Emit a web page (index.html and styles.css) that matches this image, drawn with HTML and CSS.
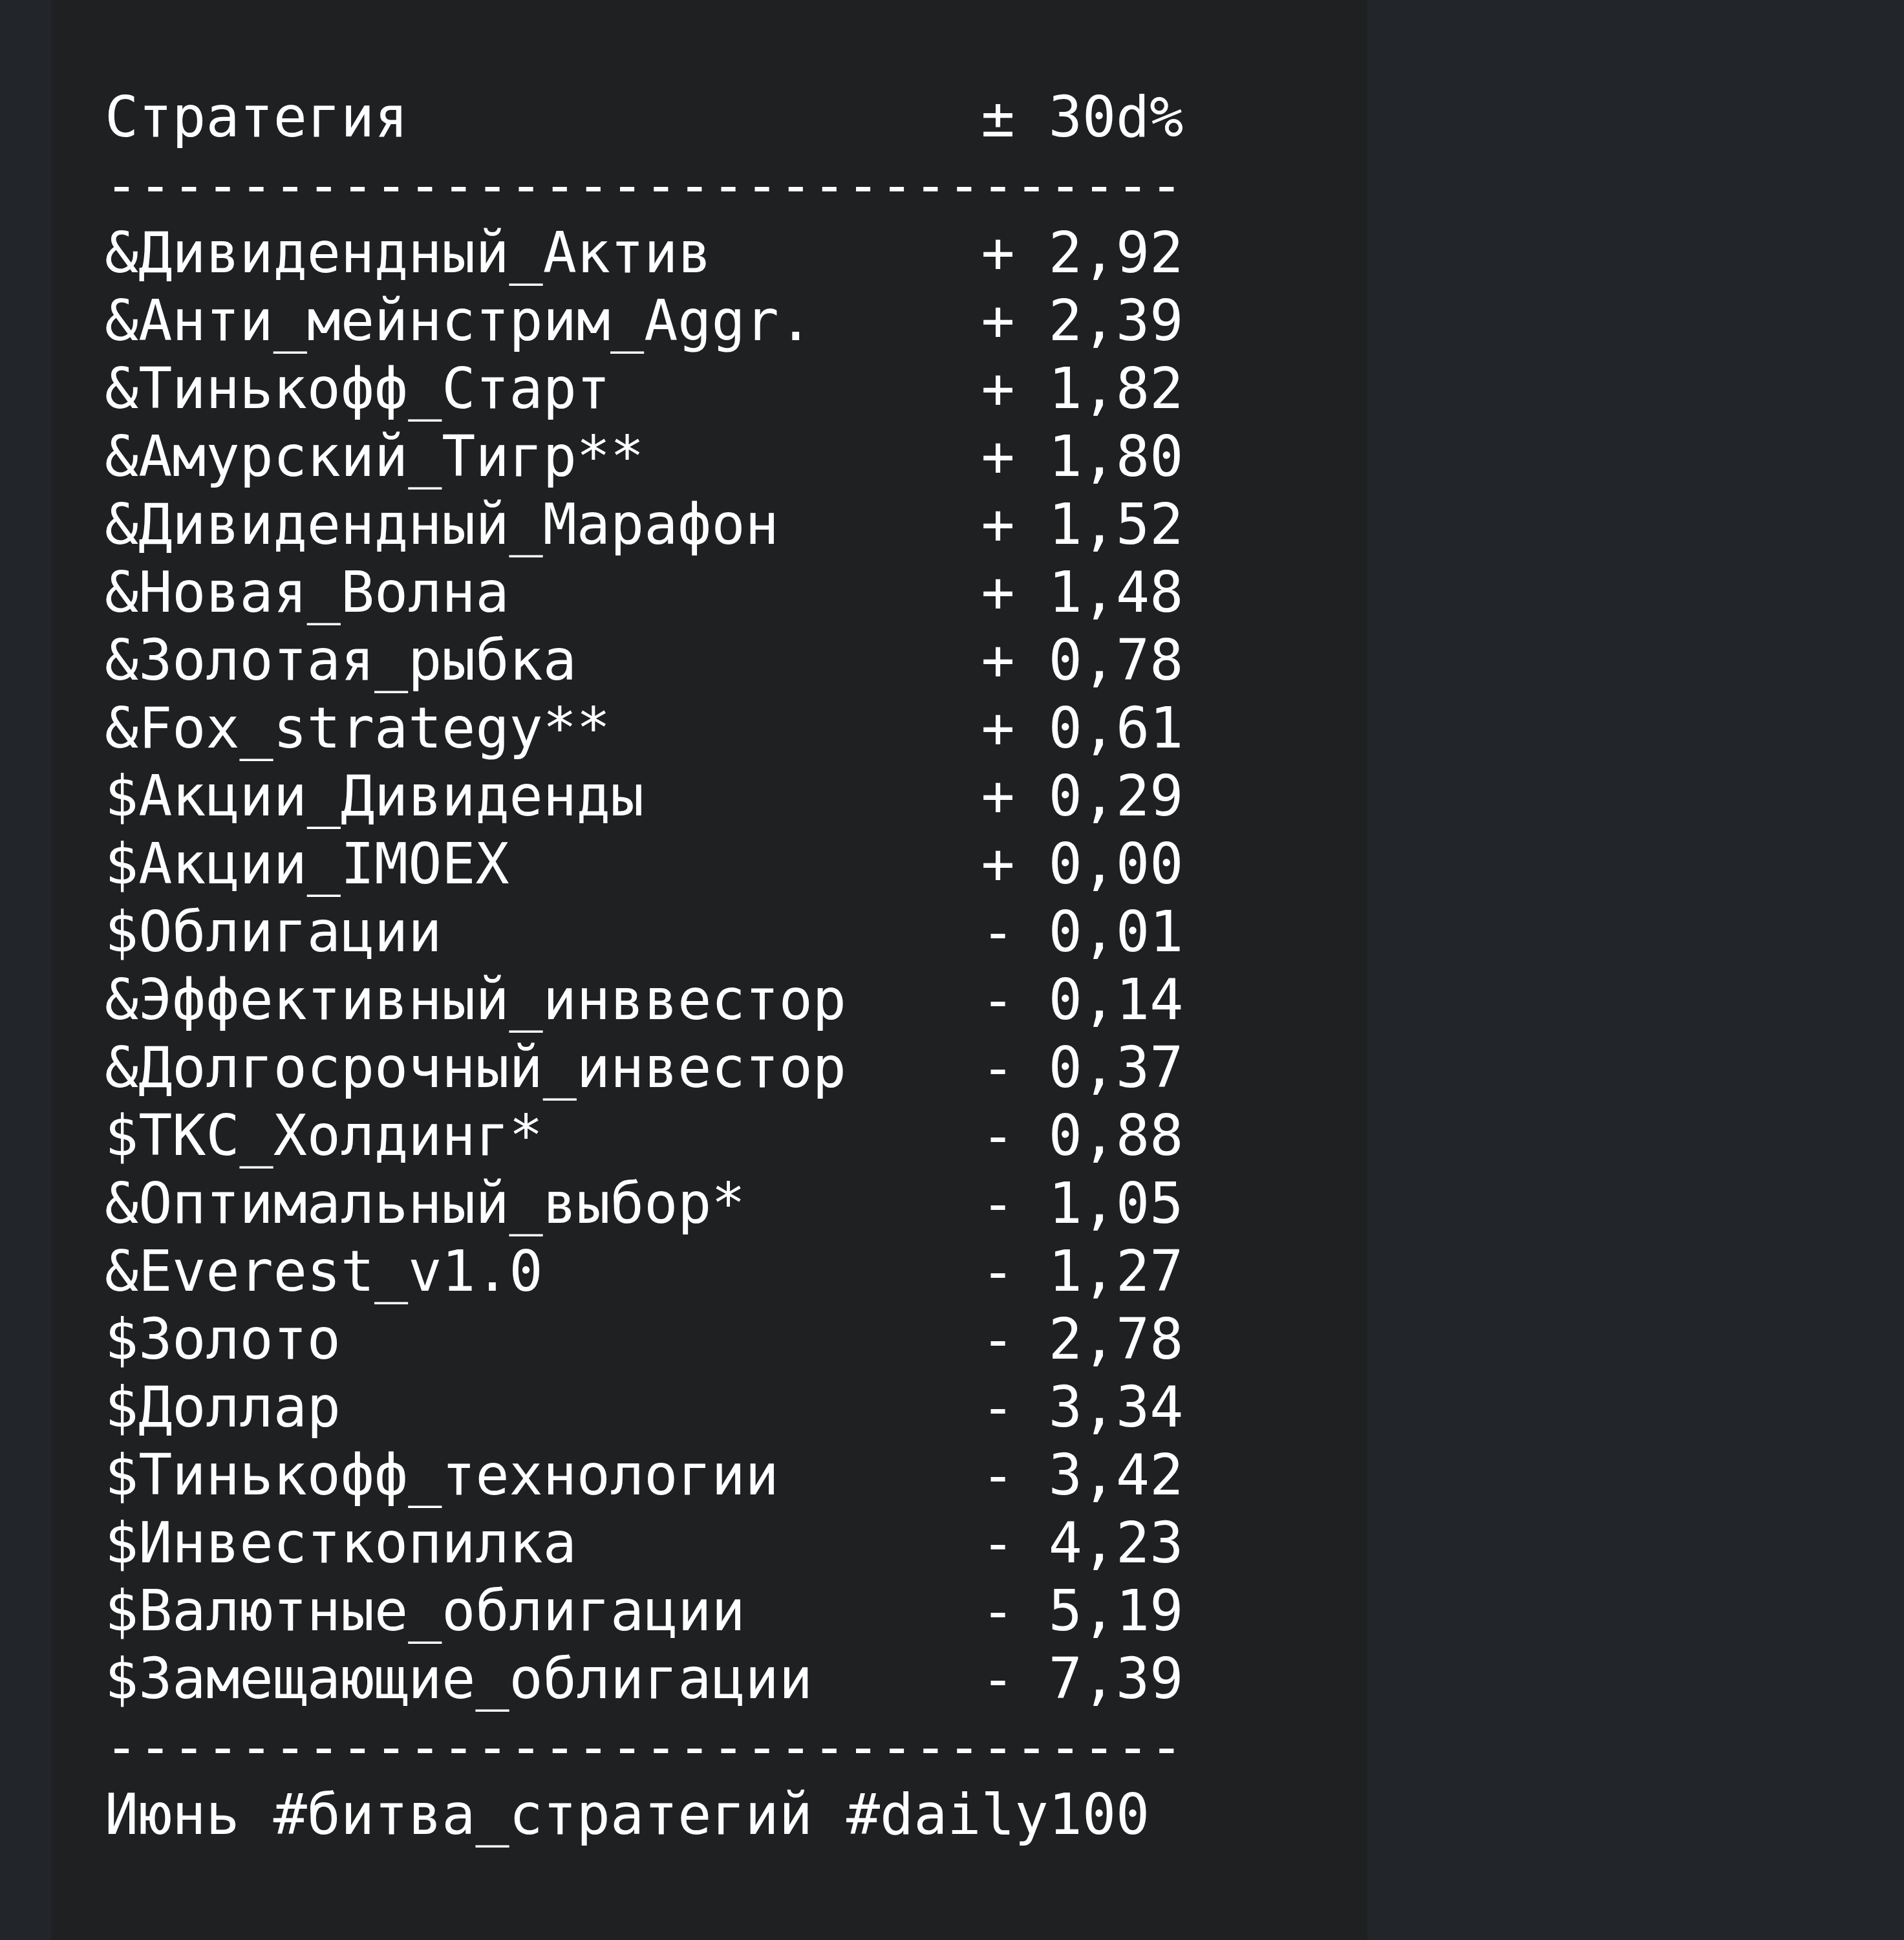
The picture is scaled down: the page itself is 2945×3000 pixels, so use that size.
FILE: index.html
```html
<!DOCTYPE html>
<html lang="ru">
<head>
    <meta charset="UTF-8">
    <title>Битва стратегий</title>
    <link rel="stylesheet" href="styles.css">
</head>
<body>

    <div class="layout">
        <div class="side"></div>

        <!-- Message -->
        <div class="message">
<pre class="mono">Стратегия                 ± 30d%
--------------------------------
&amp;Дивидендный_Актив        + 2,92
&amp;Анти_мейнстрим_Aggr.     + 2,39
&amp;Тинькофф_Старт           + 1,82
&amp;Амурский_Тигр**          + 1,80
&amp;Дивидендный_Марафон      + 1,52
&amp;Новая_Волна              + 1,48
&amp;Золотая_рыбка            + 0,78
&amp;Fox_strategy**           + 0,61
$Акции_Дивиденды          + 0,29
$Акции_IMOEX              + 0,00
$Облигации                - 0,01
&amp;Эффективный_инввестор    - 0,14
&amp;Долгосрочный_инвестор    - 0,37
$ТКС_Холдинг*             - 0,88
&amp;Оптимальный_выбор*       - 1,05
&amp;Everest_v1.0             - 1,27
$Золото                   - 2,78
$Доллар                   - 3,34
$Тинькофф_технологии      - 3,42
$Инвесткопилка            - 4,23
$Валютные_облигации       - 5,19
$Замещающие_облигации     - 7,39
--------------------------------
Июнь #битва_стратегий #daily100</pre>
        </div>

        <div class="side side-right"></div>
    </div>

</body>
</html>
```

FILE: styles.css
```css
/* General */
html, body {
    margin: 0;
    padding: 0;
    height: 100%;
    background: #222529;
}
.layout {
    display: flex;
    height: 100%;
}
.side {
    width: 79px;
    background: #222529;
}
.side-right {
    flex: 1;
}
/* Message panel */
.message {
    width: 2036px;
    background: #1f2022;
    padding: 129px 0 0 83px;
    box-sizing: border-box;
}
.mono {
    margin: 0;
    font-family: "DejaVu Sans Mono", "Liberation Mono", monospace;
    font-size: 86.6px;
    line-height: 105px;
    color: #ffffff;
}
```
